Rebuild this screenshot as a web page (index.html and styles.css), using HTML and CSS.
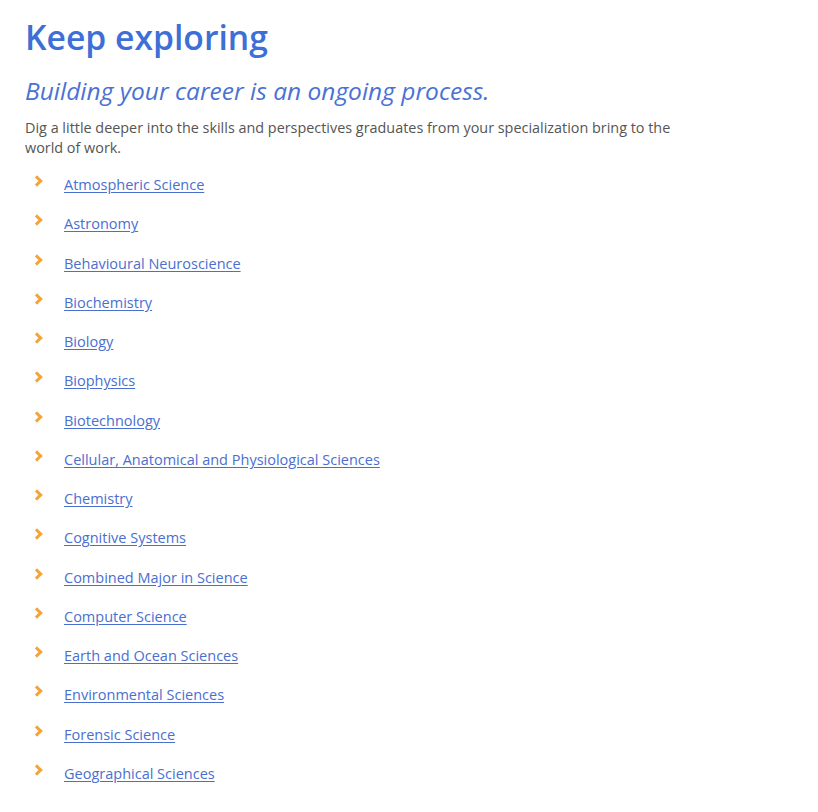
FILE: index.html
```html
<!DOCTYPE html>
<html lang="en">
<head>
<meta charset="utf-8">
<title>Keep exploring</title>
<link rel="stylesheet" href="styles.css">
</head>
<body>
<main class="explore">
  <h1 class="title">Keep exploring</h1>
  <h2 class="subtitle">Building your career is an ongoing process.</h2>
  <p class="intro">Dig a little deeper into the skills and perspectives graduates from your specialization bring to the world of work.</p>
  <ul class="links">
    <li><a href="#">Atmospheric Science</a></li>
    <li><a href="#">Astronomy</a></li>
    <li><a href="#">Behavioural Neuroscience</a></li>
    <li><a href="#">Biochemistry</a></li>
    <li><a href="#">Biology</a></li>
    <li><a href="#">Biophysics</a></li>
    <li><a href="#">Biotechnology</a></li>
    <li><a href="#">Cellular, Anatomical and Physiological Sciences</a></li>
    <li><a href="#">Chemistry</a></li>
    <li><a href="#">Cognitive Systems</a></li>
    <li><a href="#">Combined Major in Science</a></li>
    <li><a href="#">Computer Science</a></li>
    <li><a href="#">Earth and Ocean Sciences</a></li>
    <li><a href="#">Environmental Sciences</a></li>
    <li><a href="#">Forensic Science</a></li>
    <li><a href="#">Geographical Sciences</a></li>
  </ul>
</main>
</body>
</html>
```
FILE: styles.css
```css
html, body {
  margin: 0;
  padding: 0;
  background: #ffffff;
}
body {
  font-family: "Open Sans", "Liberation Sans", sans-serif;
  color: #555555;
}
.explore {
  padding: 14px 25px 0 25px;
}
.title {
  margin: 0;
  font-size: 33.7px;
  line-height: 46px;
  font-weight: 600;
  color: #3d6fd6;
}
.subtitle {
  margin: 15px 0 0 0;
  font-size: 24.5px;
  line-height: 32px;
  font-weight: 400;
  font-style: italic;
  color: #4a72d4;
}
.intro {
  margin: 11px 0 0 0;
  max-width: 660px;
  font-size: 14.4px;
  line-height: 20px;
  color: #555555;
}
.links {
  list-style: none;
  margin: 17px 0 0 0;
  padding: 0;
}
.links li {
  position: relative;
  padding-left: 39px;
  height: 39.27px;
  font-size: 14.5px;
  line-height: 20px;
}
.links li::before {
  content: "";
  position: absolute;
  left: 8px;
  top: 2px;
  width: 5px;
  height: 5px;
  border-top: 3px solid #f2a53a;
  border-right: 3px solid #f2a53a;
  transform: rotate(45deg);
}
.links a {
  color: #4a6fcf;
  text-decoration: underline;
  text-underline-offset: 2px;
}
```
